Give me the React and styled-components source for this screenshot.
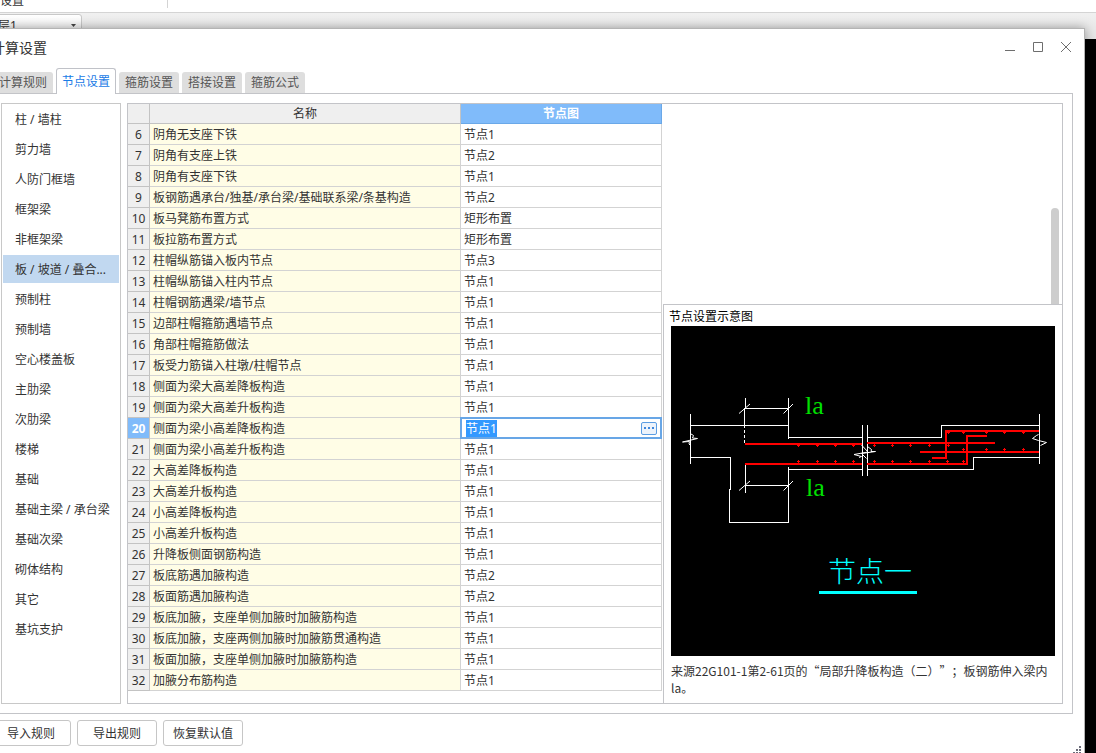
import { useEffect, useRef, useState } from "react"
import styled, { createGlobalStyle, css } from "styled-components"

const tabs = ["计算规则", "节点设置", "箍筋设置", "搭接设置", "箍筋公式"]

const categories = [
    "柱 / 墙柱",
    "剪力墙",
    "人防门框墙",
    "框架梁",
    "非框架梁",
    "板 / 坡道 / 叠合...",
    "预制柱",
    "预制墙",
    "空心楼盖板",
    "主肋梁",
    "次肋梁",
    "楼梯",
    "基础",
    "基础主梁 / 承台梁",
    "基础次梁",
    "砌体结构",
    "其它",
    "基坑支护",
]

const rows = [
    { id: 6, name: "阴角无支座下铁", node: "节点1" },
    { id: 7, name: "阴角有支座上铁", node: "节点2" },
    { id: 8, name: "阴角有支座下铁", node: "节点1" },
    { id: 9, name: "板钢筋遇承台/独基/承台梁/基础联系梁/条基构造", node: "节点2" },
    { id: 10, name: "板马凳筋布置方式", node: "矩形布置" },
    { id: 11, name: "板拉筋布置方式", node: "矩形布置" },
    { id: 12, name: "柱帽纵筋锚入板内节点", node: "节点3" },
    { id: 13, name: "柱帽纵筋锚入柱内节点", node: "节点1" },
    { id: 14, name: "柱帽钢筋遇梁/墙节点", node: "节点1" },
    { id: 15, name: "边部柱帽箍筋遇墙节点", node: "节点1" },
    { id: 16, name: "角部柱帽箍筋做法", node: "节点1" },
    { id: 17, name: "板受力筋锚入柱墩/柱帽节点", node: "节点1" },
    { id: 18, name: "侧面为梁大高差降板构造", node: "节点1" },
    { id: 19, name: "侧面为梁大高差升板构造", node: "节点1" },
    { id: 20, name: "侧面为梁小高差降板构造", node: "节点1" },
    { id: 21, name: "侧面为梁小高差升板构造", node: "节点1" },
    { id: 22, name: "大高差降板构造", node: "节点1" },
    { id: 23, name: "大高差升板构造", node: "节点1" },
    { id: 24, name: "小高差降板构造", node: "节点1" },
    { id: 25, name: "小高差升板构造", node: "节点1" },
    { id: 26, name: "升降板侧面钢筋构造", node: "节点1" },
    { id: 27, name: "板底筋遇加腋构造", node: "节点2" },
    { id: 28, name: "板面筋遇加腋构造", node: "节点2" },
    { id: 29, name: "板底加腋，支座单侧加腋时加腋筋构造", node: "节点1" },
    { id: 30, name: "板底加腋，支座两侧加腋时加腋筋贯通构造", node: "节点1" },
    { id: 31, name: "板面加腋，支座单侧加腋时加腋筋构造", node: "节点1" },
    { id: 32, name: "加腋分布筋构造", node: "节点1" },
]

// 分布筋的位置 [x, y]
const bars = [
    ...[127, 146, 164, 182, 203, 221, 239, 258, 277].map((x) => [x, 119]),
    ...[127, 146, 164, 182, 203, 221, 239, 258, 276, 292].map((x) => [x, 135]),
    ...[277, 292, 315, 333, 352].map((x) => [x, 106]),
    ...[292, 315, 333, 352].map((x) => [x, 123]),
]

function NodeDrawing() {
    return (
        <Drawing viewBox="0 0 384 330" role="img" aria-label="节点一">
            <rect width="384" height="330" fill="#000" />
            <g fill="none" stroke="#fff" shapeRendering="crispEdges">
                <path d="M19.5 88V138M19 99.5H118M19 131.5H59.5V163.5H58.5V196.5H117.5V141" />
                <path d="M74.5 72V82M73.5 82V99M74 82.5H118M117.5 72V113" />
                <path d="M73.5 99V119" strokeDasharray="3 2" />
                <path d="M74.5 138V167M74 159.5H118M117 111.5H192M117 143.5H192" />
                <path d="M191.5 99V150M196.5 99V150" />
                <path d="M196 111.5H270.5V99.5H368M196 143.5H302.5V131.5H368M368.5 88V138" />
            </g>
            <g fill="none" stroke="#fff">
                <path d="M68 87.5L79 78M112.5 87.5L122 78M68 164.5L79 155M112.5 164.5L122 155" />
                <path d="M20 108L22.5 109.5L21.5 112L26.5 112.5L11.5 116L18.5 115.5L18 118L20 120" />
                <path d="M190.5 119L197 126L183 128.5L190.5 130.5L188 131.5" />
                <path d="M196.5 120.5L200.5 123.5L200 125.5L204.5 125.5L190.5 127.5L195.5 132.5" />
                <path d="M367.5 108.5L365.5 109.5L361.5 112.5L367.5 114.5L375.5 116.5L369.5 119.5" />
            </g>
            <g fill="none" stroke="#f00" strokeWidth="2" shapeRendering="crispEdges">
                <path d="M74 118H191M74 138H191M196 117H324M249 126H368" />
                <path d="M196 138H296V110H316M368 105H275V132H261" />
            </g>
            <path
                d={bars.map(([x, y]) => `M${x - 1} ${y + 0.5}h3M${x + 0.5} ${y - 1}v3`).join("")}
                stroke="#f00"
                shapeRendering="crispEdges"
            />
            <DimText x="134" y="88">la</DimText>
            <DimText x="135" y="170">la</DimText>
            <NodeText x="157" y="256">节点一</NodeText>
            <rect x="148" y="265" width="98" height="3" fill="#0ff" />
        </Drawing>
    )
}

function NodeEditor({ label, value, onChange }) {
    const inputRef = useRef(null)

    useEffect(() => {
        inputRef.current.focus()
        inputRef.current.select()
    }, [])

    return (
        <Editor>
            <EditorInput
                ref={inputRef}
                aria-label={label}
                value={value}
                onChange={(e) => onChange(e.target.value)}
            />
            <MoreButton type="button" aria-label="选择节点">
                <svg width="10" height="2" shapeRendering="crispEdges">
                    <path d="M0 0h2v2h-2zM4 0h2v2h-2zM8 0h2v2h-2z" fill="#3f87dc" />
                </svg>
            </MoreButton>
        </Editor>
    )
}

function App() {
    const [tab, setTab] = useState("节点设置")
    const [category, setCategory] = useState(categories[5])
    const [activeRow] = useState(20)
    const [node, setNode] = useState("节点1")

    return (
        <Desktop>
            <GlobalStyle />
            <Ribbon>
                <RibbonGroup>设置</RibbonGroup>
            </Ribbon>
            <ToolRow>
                <FloorBox>
                    <FloorSelect aria-label="楼层" defaultValue="层1">
                        <option>层1</option>
                    </FloorSelect>
                    <svg width="5" height="3">
                        <path d="M0 0h5L2.5 3z" fill="#444" />
                    </svg>
                </FloorBox>
            </ToolRow>
            <Canvas />

            <Dialog role="dialog" aria-labelledby="dialog-title">
                <TitleBar>
                    <Title id="dialog-title">计算设置</Title>
                    <WindowButton type="button" aria-label="最小化">
                        <svg width="12" height="12"><path d="M1 9.5H11" /></svg>
                    </WindowButton>
                    <WindowButton type="button" aria-label="最大化">
                        <svg width="12" height="12"><path d="M1.5 1.5H10.5V10.5H1.5Z" /></svg>
                    </WindowButton>
                    <WindowButton type="button" aria-label="关闭">
                        <svg width="12" height="12"><path d="M1 1L11 11M11 1L1 11" /></svg>
                    </WindowButton>
                </TitleBar>

                <TabBar role="tablist">
                    {tabs.map((t) => (
                        <Tab
                            key={t}
                            type="button"
                            role="tab"
                            aria-selected={t === tab}
                            $active={t === tab}
                            onClick={() => setTab(t)}
                        >
                            {t}
                        </Tab>
                    ))}
                </TabBar>

                <Page>
                    <CategoryList>
                        {categories.map((c) => (
                            <Category
                                key={c}
                                type="button"
                                $active={c === category}
                                onClick={() => setCategory(c)}
                            >
                                {c}
                            </Category>
                        ))}
                    </CategoryList>

                    <Content>
                        <Table>
                            <colgroup>
                                <NumberCol />
                                <NameCol />
                                <NodeCol />
                            </colgroup>
                            <thead>
                                <tr>
                                    <HeadCell />
                                    <HeadCell>名称</HeadCell>
                                    <HeadCell $active>节点图</HeadCell>
                                </tr>
                            </thead>
                            <tbody>
                                {rows.map((row) => (
                                    <tr key={row.id}>
                                        <NumberCell scope="row" $active={row.id === activeRow}>
                                            {row.id}
                                        </NumberCell>
                                        <NameCell>{row.name}</NameCell>
                                        <NodeCell>
                                            {row.id === activeRow
                                                ? <NodeEditor label={row.name} value={node} onChange={setNode} />
                                                : row.node}
                                        </NodeCell>
                                    </tr>
                                ))}
                            </tbody>
                        </Table>

                        <Side>
                            <ScrollArea>
                                <Thumb />
                            </ScrollArea>
                            <Preview>
                                <PreviewTitle>节点设置示意图</PreviewTitle>
                                <PreviewBody>
                                    <NodeDrawing />
                                    <Caption>
                                        来源22G101-1第2-61页的“局部升降板构造（二）”；板钢筋伸入梁内la。
                                    </Caption>
                                </PreviewBody>
                            </Preview>
                        </Side>
                    </Content>
                </Page>

                <Footer>
                    <FooterButton type="button">导入规则</FooterButton>
                    <FooterButton type="button">导出规则</FooterButton>
                    <FooterButton type="button">恢复默认值</FooterButton>
                </Footer>
                <Grip width="8" height="8" shapeRendering="crispEdges">
                    <path d="M6 0h2v2h-2zM3 3h2v2h-2zM6 3h2v2h-2zM0 6h2v2h-2zM3 6h2v2h-2zM6 6h2v2h-2z" fill="#6b6b78" />
                </Grip>
            </Dialog>
        </Desktop>
    )
}

export default App

const GlobalStyle = createGlobalStyle`
    * {
        box-sizing: border-box;
    }
    body {
        margin: 0;
        overflow: hidden;
        background: #000;
    }
    body, button, input, select {
        font-family: "Noto Sans", "Noto Sans CJK SC", sans-serif;
        font-size: 12px;
        color: #333;
    }
`;

const Desktop = styled.div`
    position: relative;
    display: flex;
    flex-direction: column;
    height: 100vh;
    overflow: hidden;
`;

const Ribbon = styled.div`
    display: flex;
    align-items: flex-start;
    height: 13px;
    background: #fff;
    border-bottom: 1px solid #d4d4d4;
`;

const RibbonGroup = styled.div`
    display: flex;
    align-items: flex-end;
    width: 168px;
    height: 8px;
    line-height: 14px;
    border-right: 1px solid #d4d4d4;
`;

const ToolRow = styled.div`
    height: 26px;
    padding-top: 1px;
    background: linear-gradient(#f0f0f0, #e4e4e4);
`;

const FloorBox = styled.div`
    display: flex;
    align-items: center;
    width: 94px;
    height: 22px;
    margin-left: -12px;
    padding-right: 5px;
    background: linear-gradient(#fff, #ececec);
    border: 1px solid #c8c8c8;
    border-radius: 3px;
`;

const FloorSelect = styled.select`
    flex: 1;
    appearance: none;
    padding: 0 0 0 9px;
    border: none;
    background: none;
    outline: none;
`;

const Canvas = styled.div`
    flex: 1;
    background: #000;
`;

const Dialog = styled.div`
    position: absolute;
    top: 28px;
    left: -21px;
    right: 11px;
    display: flex;
    flex-direction: column;
    height: calc(100vh - 24px);
    background: #fff;
    border: 1px solid #b4b4b4;
    box-shadow: 0 0 10px rgba(0, 0, 0, 0.35);
`;

const TitleBar = styled.div`
    display: flex;
    align-items: center;
    height: 39px;
    padding: 0 4px 3px 11px;
`;

const Title = styled.h1`
    flex: 1;
    margin: 0;
    font-size: 14px;
    font-weight: 400;
`;

const WindowButton = styled.button`
    display: flex;
    align-items: center;
    justify-content: center;
    width: 28px;
    height: 28px;
    padding: 0;
    border: none;
    background: none;

    svg {
        fill: none;
        stroke: #6e6e6e;
    }
`;

const TabBar = styled.div`
    display: flex;
    align-items: flex-end;
    gap: 3px;
    height: 26px;
    padding: 0 13px;
`;

const Tab = styled.button`
    width: 60px;
    height: 21px;
    margin-bottom: 1px;
    padding: 0;
    line-height: 20px;
    color: #555;
    background: #dedede;
    border: none;
    border-radius: 3px 3px 0 0;

    ${({ $active }) => $active && css`
        z-index: 1;
        height: 26px;
        margin-bottom: 0;
        line-height: 24px;
        color: #1a7be6;
        background: #fff;
        border: 1px solid #c0c2c8;
        border-bottom: none;
    `}
`;

const Page = styled.div`
    display: flex;
    flex: 1;
    gap: 6px;
    min-height: 0;
    margin: -1px 11px 0;
    padding: 9px;
    border: 1px solid #c3c4c8;
`;

const CategoryList = styled.nav`
    display: flex;
    flex-direction: column;
    gap: 2px;
    width: 120px;
    padding: 1px;
    border: 1px solid #c8c8c8;
`;

const Category = styled.button`
    height: 28px;
    padding: 0 0 0 12px;
    text-align: left;
    white-space: nowrap;
    overflow: hidden;
    background: ${({ $active }) => ($active ? "#c1d8f0" : "transparent")};
    border: none;
`;

const Content = styled.div`
    display: flex;
    flex: 1;
    align-items: flex-start;
    border: 1px solid #c3c4c8;
`;

const Table = styled.table`
    width: 534px;
    table-layout: fixed;
    border-spacing: 0;
`;

const NumberCol = styled.col`
    width: 22px;
`;

const NameCol = styled.col`
    width: 311px;
`;

const NodeCol = styled.col`
    width: 201px;
`;

const HeadCell = styled.th`
    height: 20px;
    padding: 1px 0 0;
    line-height: 18px;
    font-weight: ${({ $active }) => ($active ? 700 : 400)};
    color: ${({ $active }) => ($active ? "#fff" : "#333")};
    background: ${({ $active }) => ($active ? "#80bbfa" : "#efefef")};
    border: solid ${({ $active }) => ($active ? "#6aa8e8" : "#c3c3c3")};
    border-width: 0 1px 1px 0;
`;

const NumberCell = styled.th`
    height: 21px;
    padding: 2px 0 0;
    line-height: 18px;
    font-weight: ${({ $active }) => ($active ? 700 : 400)};
    color: ${({ $active }) => ($active ? "#fff" : "#333")};
    background: ${({ $active }) => ($active ? "#80bbfa" : "#efefef")};
    border: solid #c3c3c3;
    border-width: 0 1px 1px 0;
`;

const NameCell = styled.td`
    height: 21px;
    padding: 2px 3px 0;
    line-height: 18px;
    white-space: nowrap;
    background: #fffde6;
    border: solid #d3d3d3;
    border-width: 0 1px 1px 0;
`;

const NodeCell = styled(NameCell)`
    position: relative;
    background: #fff;
`;

const Editor = styled.div`
    position: absolute;
    inset: -1px;
    display: flex;
    align-items: center;
    padding: 0 3px 0 4px;
    background: #fff;
    border: 2px solid #68a6e6;
`;

const EditorInput = styled.input`
    flex: 1;
    min-width: 0;
    height: 17px;
    padding: 0;
    border: none;
    outline: none;

    &::selection {
        color: #fff;
        background: #3399ff;
    }
`;

const MoreButton = styled.button`
    display: flex;
    align-items: center;
    justify-content: center;
    width: 16px;
    height: 13px;
    padding: 0;
    background: #edf3fb;
    border: 1px solid #5b9de3;
    border-radius: 2px;
`;

const Side = styled.div`
    display: flex;
    flex: 1;
    flex-direction: column;
    align-self: stretch;
    min-width: 0;
    padding-left: 1px;
`;

const ScrollArea = styled.div`
    display: flex;
    flex: 1;
    align-items: flex-end;
    justify-content: flex-end;
    padding-right: 3px;
`;

const Thumb = styled.div`
    width: 8px;
    height: 96px;
    background: #cdcdcd;
    border-radius: 4px 4px 0 0;
`;

const Preview = styled.section`
    border: solid #c3c4c8;
    border-width: 1px 0 0 1px;
    padding: 3px 7px 7px 5px;
`;

const PreviewTitle = styled.h2`
    margin: 0;
    font-size: 12px;
    font-weight: 400;
    line-height: 18px;
    color: #000;
`;

const PreviewBody = styled.div`
    padding-left: 2px;
`;

const Drawing = styled.svg`
    display: block;
    width: 100%;
`;

const DimText = styled.text`
    font-family: "Liberation Serif", serif;
    font-size: 26px;
    fill: #00e000;
`;

const NodeText = styled.text`
    font-family: "Noto Sans CJK SC", sans-serif;
    font-size: 28px;
    font-weight: 300;
    fill: #0ff;
`;

const Caption = styled.p`
    margin: 0;
    padding-top: 6px;
    font-family: "Noto Sans CJK SC", sans-serif;
    line-height: 17px;
    text-spacing-trim: space-all;
`;

const Footer = styled.div`
    display: flex;
    gap: 6px;
    padding: 6px 11px 10px;
`;

const FooterButton = styled.button`
    width: 80px;
    height: 26px;
    padding: 0;
    background: #fff;
    border: 1px solid #c6c6c6;
    border-radius: 3px;
`;

const Grip = styled.svg`
    position: absolute;
    right: 3px;
    bottom: 2px;
`;
